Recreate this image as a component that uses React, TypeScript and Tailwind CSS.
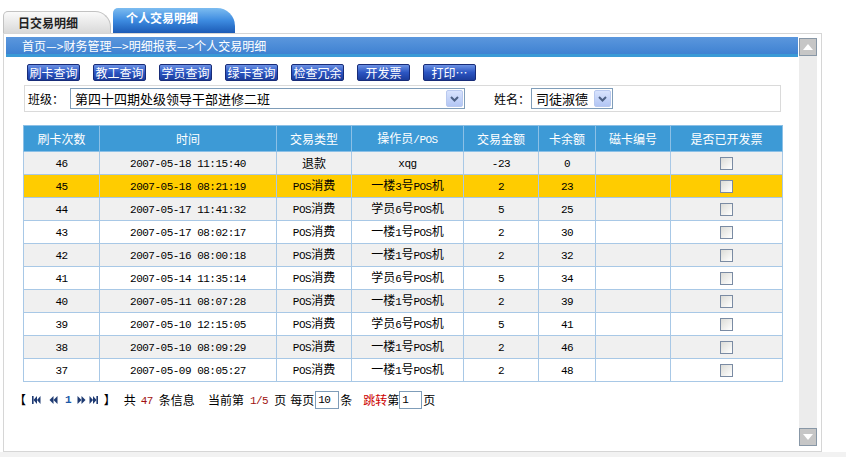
import React from 'react';

const rows = [
  ['46', '2007-05-18 11:15:40', '退款', 'xqg', '-23', '0'],
  ['45', '2007-05-18 08:21:19', 'POS消费', '一楼3号POS机', '2', '23'],
  ['44', '2007-05-17 11:41:32', 'POS消费', '学员6号POS机', '5', '25'],
  ['43', '2007-05-17 08:02:17', 'POS消费', '一楼1号POS机', '2', '30'],
  ['42', '2007-05-16 08:00:18', 'POS消费', '一楼1号POS机', '2', '32'],
  ['41', '2007-05-14 11:35:14', 'POS消费', '学员6号POS机', '5', '34'],
  ['40', '2007-05-11 08:07:28', 'POS消费', '一楼1号POS机', '2', '39'],
  ['39', '2007-05-10 12:15:05', 'POS消费', '学员6号POS机', '5', '41'],
  ['38', '2007-05-10 08:09:29', 'POS消费', '一楼1号POS机', '2', '46'],
  ['37', '2007-05-09 08:05:27', 'POS消费', '一楼1号POS机', '2', '48'],
];

const headers = ['刷卡次数', '时间', '交易类型', '操作员/POS', '交易金额', '卡余额', '磁卡编号', '是否已开发票'];
const widths = ['w-[76px]', 'w-[177px]', 'w-[75px]', 'w-[112px]', 'w-[75px]', 'w-[57px]', 'w-[75px]', 'w-[112px]'];

const buttons = ['刷卡查询', '教工查询', '学员查询', '绿卡查询', '检查冗余', '开发票', '打印…'];

// latin runs in a narrow mono face, like the old bitmap songti
function Mixed({ text }: { text: string }) {
  const parts = text.split(/([\x20-\x7e]+)/).filter(Boolean);
  return (
    <>
      {parts.map((p, i) =>
        /^[\x20-\x7e]+$/.test(p) ? (
          <span key={i} className="font-['Liberation_Mono',monospace] text-[11px] tracking-[-0.5px] whitespace-pre">
            {p}
          </span>
        ) : (
          <span key={i}>{p}</span>
        )
      )}
    </>
  );
}

function Checkbox() {
  return (
    <div className="mx-auto w-[13px] h-[13px] border border-[#7a8ba3] bg-gradient-to-br from-[#dcdcd7] to-white" />
  );
}

function ComboArrow() {
  return (
    <div className="w-[17px] h-[17px] flex items-center justify-center rounded-[2px] border border-[#b9c9ef] bg-gradient-to-b from-[#d8e3fd] to-[#b3c6f4]">
      <svg width="9" height="6" viewBox="0 0 9 6">
        <path d="M1 1 L4.5 4.5 L8 1" stroke="#4d6185" strokeWidth="2" fill="none" />
      </svg>
    </div>
  );
}

function NavIcon({ dir, bar }: { dir: 'l' | 'r'; bar: boolean }) {
  return (
    <svg width="9" height="8" viewBox="0 0 9 8">
      {dir === 'l' ? (
        <g fill="#1e3a72">
          {bar && <rect x="0" y="0" width="1.6" height="8" />}
          <path d={bar ? 'M1.5 4 L5 0 L5 8 Z' : 'M0.5 4 L4.5 0 L4.5 8 Z'} />
          <path d={bar ? 'M5 4 L8.5 0 L8.5 8 Z' : 'M4.5 4 L8.5 0 L8.5 8 Z'} />
        </g>
      ) : (
        <g fill="#1e3a72">
          <path d={bar ? 'M0.5 0 L4 4 L0.5 8 Z' : 'M0.5 0 L4.5 4 L0.5 8 Z'} />
          <path d={bar ? 'M4 0 L7.5 4 L4 8 Z' : 'M4.5 0 L8.5 4 L4.5 8 Z'} />
          {bar && <rect x="7.4" y="0" width="1.6" height="8" />}
        </g>
      )}
    </svg>
  );
}

function ScrollBtn({ up }: { up: boolean }) {
  return (
    <div className="w-[18px] h-[18px] border border-[#8897a6] bg-[#c6c6c6] flex items-center justify-center">
      <svg width="10" height="6" viewBox="0 0 10 6">
        <path d={up ? 'M0 6 L5 0 L10 6 Z' : 'M0 0 L5 6 L10 0 Z'} fill="#ffffff" />
      </svg>
    </div>
  );
}

export default function App() {
  return (
    <div className="w-[846px] h-[457px] bg-white overflow-hidden text-[12px] text-black font-['Noto_Sans_CJK_SC',sans-serif]">
      {/* Tabs */}
      <div className="h-[33px] flex items-end pl-[3px]">
        <div className="w-[108px] h-[22px] rounded-tl-[5px] rounded-tr-[16px] border border-b-0 border-[#c2c2c2] bg-gradient-to-b from-[#fafafa] to-[#d9d9d9] pl-[14px] flex items-center font-bold text-[#222] text-[12px] leading-none">
          日交易明细
        </div>
        <div className="ml-[2px] w-[122px] h-[25px] rounded-tl-[5px] rounded-tr-[18px] bg-gradient-to-b from-[#7cbcf0] via-[#3d8be0] to-[#1c5bb6] pl-[13px] pb-[6px] flex items-center font-bold text-white text-[12px] leading-none">
          个人交易明细
        </div>
      </div>

      {/* Frame */}
      <div className="ml-[3px] w-[819px] h-[419px] border border-[#d6d6d6] flex pt-[3px] pl-[2px]">
        <div className="w-[792px] flex flex-col">
          {/* Breadcrumb */}
          <div className="h-[20px] bg-gradient-to-b from-[#5b97dd] to-[#3f82d2] border-b-[3px] border-[#3a9ad6] pl-[16px] flex items-center text-white text-[12px] leading-none">
            首页—&gt;财务管理—&gt;明细报表—&gt;个人交易明细
          </div>

          {/* Buttons */}
          <div className="mt-[7px] pl-[21px] flex gap-[13px]">
            {buttons.map((b) => (
              <div
                key={b}
                className="w-[53px] h-[17px] rounded-[2px] border border-[#182c78] bg-gradient-to-b from-[#6d92e4] via-[#2c55c2] to-[#1b3c9c] text-white text-[12px] leading-none flex items-center justify-center"
              >
                {b}
              </div>
            ))}
          </div>

          {/* Filter */}
          <div className="mt-[4px] ml-[18px] w-[757px] h-[27px] border border-[#dadada] flex items-center pl-[3px]">
            <span className="w-[42px] text-[12px] whitespace-nowrap">班级：</span>
            <div className="w-[395px] h-[21px] border border-[#7f9db9] bg-white flex items-center pl-[4px] pr-[1px]">
              <span className="flex-1 text-[13px] leading-none">第四十四期处级领导干部进修二班</span>
              <ComboArrow />
            </div>
            <span className="ml-[29px] w-[37px] text-[12px] whitespace-nowrap">姓名：</span>
            <div className="w-[82px] h-[21px] border border-[#7f9db9] bg-white flex items-center pl-[4px] pr-[1px]">
              <span className="flex-1 text-[13px] leading-none">司徒淑德</span>
              <ComboArrow />
            </div>
          </div>

          {/* Table */}
          <table className="mt-[13px] ml-[17px] w-[759px] border-collapse table-fixed text-[12px]">
            <thead>
              <tr className="h-[26px] bg-[#3d9ad6] text-white">
                {headers.map((h, i) => (
                  <th key={h} className={`${widths[i]} border border-[#8cc0e6] font-normal text-center`}>
                    <Mixed text={h} />
                  </th>
                ))}
              </tr>
            </thead>
            <tbody>
              {rows.map((r, idx) => (
                <tr
                  key={r[0]}
                  className={`h-[23px] ${idx === 1 ? 'bg-[#ffcc00]' : idx % 2 === 0 ? 'bg-[#f0f0f0]' : 'bg-white'}`}
                >
                  {r.map((c, i) => (
                    <td key={i} className="border border-[#a8c8e6] text-center leading-none">
                      <Mixed text={c} />
                    </td>
                  ))}
                  <td className="border border-[#a8c8e6]" />
                  <td className="border border-[#a8c8e6]">
                    <Checkbox />
                  </td>
                </tr>
              ))}
            </tbody>
          </table>

          {/* Pagination */}
          <div className="mt-[9px] pl-[8px] h-[18px] flex items-center text-[12px] leading-none whitespace-nowrap">
            <span>【</span>
            <span className="ml-[6px]"><NavIcon dir="l" bar /></span>
            <span className="ml-[8px]"><NavIcon dir="l" bar={false} /></span>
            <span className="ml-[7px] text-[#1c5aa8] font-bold font-['Liberation_Mono',monospace] text-[11px]">1</span>
            <span className="ml-[5px]"><NavIcon dir="r" bar={false} /></span>
            <span className="ml-[3px]"><NavIcon dir="r" bar /></span>
            <span className="ml-[6px]">】</span>
            <span className="ml-[8px]">共</span>
            <span className="ml-[5px] text-[#a01010]"><Mixed text="47" /></span>
            <span className="ml-[6px]">条信息</span>
            <span className="ml-[13px]">当前第</span>
            <span className="ml-[6px] text-[#a01010]"><Mixed text="1/5" /></span>
            <span className="ml-[6px]">页</span>
            <span className="ml-[4px]">每页</span>
            <div className="ml-[1px] w-[24px] h-[18px] border border-[#7f9db9] flex items-center pl-[2px]">
              <Mixed text="10" />
            </div>
            <span className="ml-[1px]">条</span>
            <span className="ml-[11px] text-[#cc0000]">跳转</span>
            <span>第</span>
            <div className="w-[23px] h-[18px] border border-[#7f9db9] flex items-center pl-[2px]">
              <Mixed text="1" />
            </div>
            <span className="ml-[1px]">页</span>
          </div>
        </div>

        {/* Scrollbar */}
        <div className="ml-[1px] mt-[1px] w-[18px] h-[408px] bg-[#ececec] flex flex-col justify-between">
          <ScrollBtn up />
          <ScrollBtn up={false} />
        </div>
      </div>
      <div className="h-[5px] bg-[#f2f2f2]" />
    </div>
  );
}
